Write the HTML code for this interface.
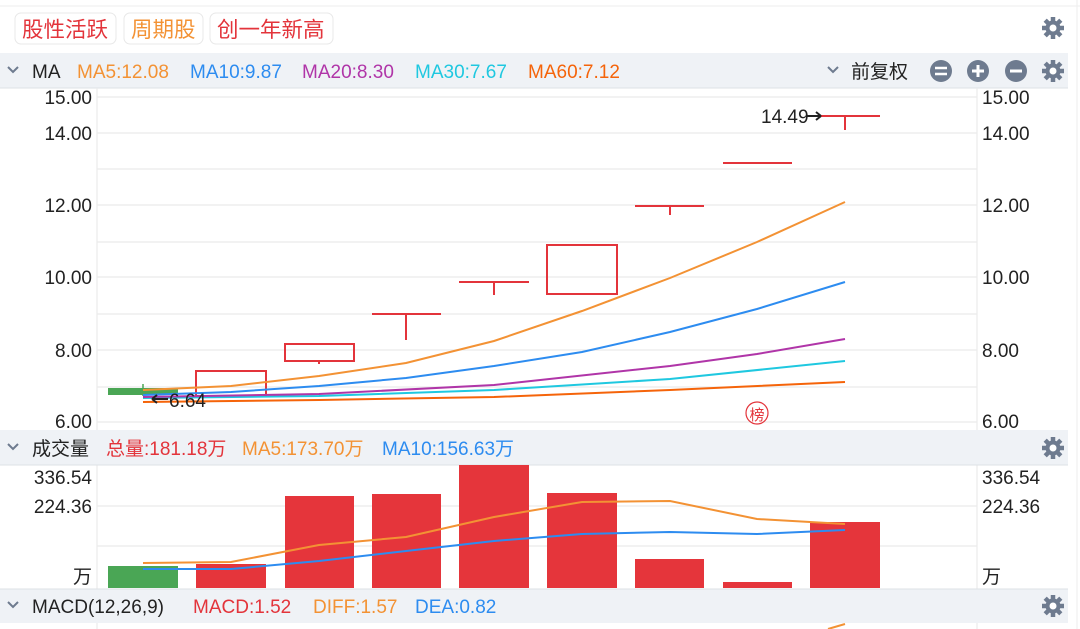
<!DOCTYPE html>
<html><head><meta charset="utf-8"><style>
body{margin:0;width:1080px;height:629px;overflow:hidden;background:#fff;font-family:"Liberation Sans","Noto Sans CJK SC",sans-serif;}
</style></head><body>
<svg width="1080" height="629" xmlns="http://www.w3.org/2000/svg" style="position:absolute;left:0;top:0;font-family:'Liberation Sans','Noto Sans CJK SC',sans-serif">
<rect x="0" y="0" width="1080" height="629" fill="#fff"/>
<line x1="0" y1="6" x2="1080" y2="6" stroke="#eee"/>
<rect x="15" y="13" width="101" height="31" rx="6" fill="#fff" stroke="#e8e8e8"/>
<text x="22" y="37" font-size="21.5" fill="#e3343b">股性活跃</text>
<rect x="124" y="13" width="79" height="31" rx="6" fill="#fff" stroke="#e8e8e8"/>
<text x="131" y="37" font-size="21.5" fill="#f39234">周期股</text>
<rect x="210" y="13" width="123" height="31" rx="6" fill="#fff" stroke="#e8e8e8"/>
<text x="217" y="37" font-size="21.5" fill="#e3343b">创一年新高</text>
<defs>
<g id="gear"><circle r="7.5" fill="#6e7b8f"/><g stroke="#6e7b8f" stroke-width="4.5"><line x1="0" y1="-11" x2="0" y2="11"/><line x1="-11" y1="0" x2="11" y2="0"/><line x1="-7.8" y1="-7.8" x2="7.8" y2="7.8"/><line x1="-7.8" y1="7.8" x2="7.8" y2="-7.8"/></g><circle r="3.5" fill="#fff"/></g>
</defs>
<use href="#gear" x="1053" y="28"/>
<rect x="0" y="53" width="1068" height="35" fill="#eff2f6"/>
<line x1="0" y1="88" x2="1068" y2="88" stroke="#dde1e6"/>
<path d="M8 67 L13 72 L18 67" fill="none" stroke="#6e7b8f" stroke-width="2"/>
<text x="32" y="78" font-size="19" fill="#222">MA</text>
<text x="77" y="78" font-size="19" fill="#f39234">MA5:12.08</text>
<text x="190" y="78" font-size="19" fill="#2d8cf0">MA10:9.87</text>
<text x="302" y="78" font-size="19" fill="#b035a8">MA20:8.30</text>
<text x="415" y="78" font-size="19" fill="#1fc8e0">MA30:7.67</text>
<text x="528" y="78" font-size="19" fill="#f5640a">MA60:7.12</text>
<path d="M828 67 L833 72 L838 67" fill="none" stroke="#6e7b8f" stroke-width="2"/>
<text x="851" y="78" font-size="19" fill="#222">前复权</text>
<circle cx="941" cy="71" r="11" fill="#6e7b8f"/><line x1="935" y1="68" x2="947" y2="68" stroke="#fff" stroke-width="2.5"/><line x1="935" y1="74" x2="947" y2="74" stroke="#fff" stroke-width="2.5"/>
<circle cx="978" cy="71" r="11" fill="#6e7b8f"/><line x1="972" y1="71" x2="984" y2="71" stroke="#fff" stroke-width="3"/><line x1="978" y1="65" x2="978" y2="77" stroke="#fff" stroke-width="3"/>
<circle cx="1016" cy="71" r="11" fill="#6e7b8f"/><line x1="1010" y1="71" x2="1022" y2="71" stroke="#fff" stroke-width="3"/>
<use href="#gear" x="1053" y="71"/>
<g stroke="#ebebeb" stroke-width="1.2">
<line x1="97" y1="97" x2="977" y2="97"/><line x1="97" y1="133" x2="977" y2="133"/><line x1="97" y1="169" x2="977" y2="169"/><line x1="97" y1="205" x2="977" y2="205"/><line x1="97" y1="242" x2="977" y2="242"/><line x1="97" y1="277" x2="977" y2="277"/><line x1="97" y1="314" x2="977" y2="314"/><line x1="97" y1="350" x2="977" y2="350"/><line x1="97" y1="387" x2="977" y2="387"/><line x1="97" y1="422" x2="977" y2="422"/>
<line x1="97" y1="88" x2="97" y2="629"/><line x1="977" y1="88" x2="977" y2="629"/>
</g>
<line x1="1077" y1="0" x2="1077" y2="629" stroke="#eee"/>
<g font-size="19" fill="#222">
<text x="92" y="104" text-anchor="end">15.00</text><text x="92" y="140" text-anchor="end">14.00</text><text x="92" y="212" text-anchor="end">12.00</text><text x="92" y="284" text-anchor="end">10.00</text><text x="92" y="357" text-anchor="end">8.00</text><text x="92" y="428" text-anchor="end">6.00</text>
<text x="982" y="104">15.00</text><text x="982" y="140">14.00</text><text x="982" y="212">12.00</text><text x="982" y="284">10.00</text><text x="982" y="357">8.00</text><text x="982" y="428">6.00</text>
</g>
<g stroke="#e3343b" stroke-width="2" fill="none">
<rect x="196" y="371" width="70" height="25"/>
<rect x="285" y="344" width="69" height="17"/><line x1="319" y1="361" x2="319" y2="364"/>
<line x1="372" y1="314" x2="441" y2="314"/><line x1="406" y1="314" x2="406" y2="340"/>
<line x1="459" y1="282" x2="529" y2="282"/><line x1="494" y1="282" x2="494" y2="295"/>
<rect x="547" y="245" width="70" height="49"/>
<line x1="635" y1="206" x2="704" y2="206"/><line x1="670" y1="206" x2="670" y2="215"/>
<line x1="723" y1="163" x2="792" y2="163"/>
<line x1="810" y1="116" x2="880" y2="116"/><line x1="845" y1="116" x2="845" y2="130"/>
</g>
<rect x="108" y="388" width="70" height="7" fill="#4aa655"/><line x1="143" y1="384" x2="143" y2="396" stroke="#4aa655" stroke-width="1.5"/>
<g fill="none" stroke-width="2">
<polyline stroke="#f5640a" points="143,402 319,400 494,397 670,390 845,382"/>
<polyline stroke="#1fc8e0" points="143,398 319,396 494,390 670,379 845,361"/>
<polyline stroke="#b035a8" points="143,397 319,394 494,385 670,366 757,354 845,339"/>
<polyline stroke="#2d8cf0" points="143,395 231,392 319,386 406,378 494,366 582,352 670,332 757,309 845,282"/>
<polyline stroke="#f39234" points="143,390 231,386 319,376 406,363 494,341 582,311 670,278 757,242 845,202"/>
</g>
<path d="M152 399 L168 399 M152 399 L157 395 M152 399 L157 403" stroke="#222" stroke-width="2" fill="none"/>
<text x="169" y="407" font-size="19" fill="#222">6.64</text>
<text x="761" y="123" font-size="19" fill="#222">14.49</text>
<path d="M807 116 L821 116 M821 116 L816 112 M821 116 L816 120" stroke="#222" stroke-width="2" fill="none"/>
<circle cx="757" cy="413" r="11" fill="#fff" stroke="#e3343b" stroke-width="1.2"/>
<text x="757" y="420" font-size="15" fill="#e3343b" text-anchor="middle">榜</text>
<rect x="0" y="430" width="1068" height="35" fill="#eff2f6"/>
<line x1="0" y1="465" x2="1068" y2="465" stroke="#dde1e6"/>
<path d="M8 444 L13 449 L18 444" fill="none" stroke="#6e7b8f" stroke-width="2"/>
<text x="32" y="455" font-size="19" fill="#222">成交量</text>
<text x="106" y="455" font-size="19" fill="#e3343b">总量:181.18万</text>
<text x="242" y="455" font-size="19" fill="#f39234">MA5:173.70万</text>
<text x="382" y="455" font-size="19" fill="#2d8cf0">MA10:156.63万</text>
<use href="#gear" x="1053" y="448"/>
<g stroke="#ebebeb" stroke-width="1.2"><line x1="97" y1="506" x2="977" y2="506"/><line x1="97" y1="546" x2="977" y2="546"/></g>
<g font-size="19" fill="#222">
<text x="92" y="484" text-anchor="end">336.54</text><text x="92" y="513" text-anchor="end">224.36</text><text x="92" y="583" text-anchor="end">万</text>
<text x="982" y="484">336.54</text><text x="982" y="513">224.36</text><text x="982" y="583">万</text>
</g>
<rect x="108" y="566" width="70" height="22" fill="#4aa655"/>
<g fill="#e5353b">
<rect x="196" y="564" width="70" height="24"/><rect x="285" y="496" width="69" height="92"/><rect x="372" y="494" width="69" height="94"/><rect x="459" y="465" width="70" height="123"/><rect x="547" y="493" width="70" height="95"/><rect x="635" y="559" width="69" height="29"/><rect x="723" y="582" width="69" height="6"/><rect x="810" y="522" width="70" height="66"/>
</g>
<g fill="none" stroke-width="2">
<polyline stroke="#f39234" points="143,563 231,562 319,545 406,537 494,517 582,502 670,501 757,519 845,524"/>
<polyline stroke="#2d8cf0" points="143,569 231,569 319,561 406,551 494,541 582,534 670,532 757,534 845,530"/>
</g>
<rect x="0" y="589" width="1068" height="34" fill="#eff2f6"/>
<line x1="0" y1="589" x2="1068" y2="589" stroke="#dde1e6"/>
<path d="M8 602 L13 607 L18 602" fill="none" stroke="#6e7b8f" stroke-width="2"/>
<text x="32" y="613" font-size="19" fill="#222">MACD(12,26,9)</text>
<text x="193" y="613" font-size="19" fill="#e3343b">MACD:1.52</text>
<text x="313" y="613" font-size="19" fill="#f39234">DIFF:1.57</text>
<text x="415" y="613" font-size="19" fill="#2d8cf0">DEA:0.82</text>
<use href="#gear" x="1053" y="606"/>
<line x1="828" y1="629" x2="845" y2="624" stroke="#f39234" stroke-width="2"/>
</svg>
</body></html>
